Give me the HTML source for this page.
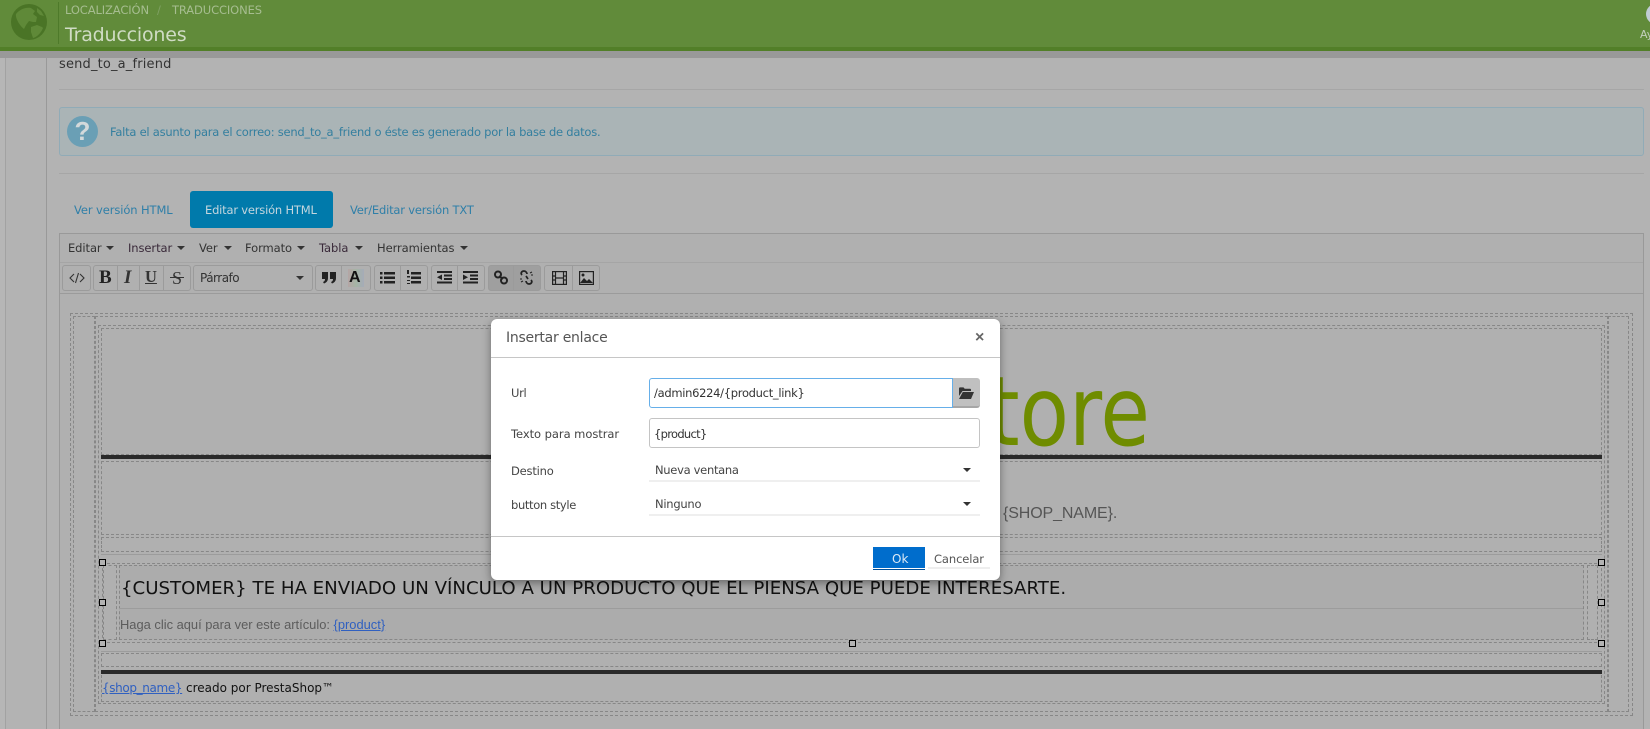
<!DOCTYPE html>
<html lang="es"><head><meta charset="utf-8"><title>Traducciones</title>
<style>
html,body{margin:0;padding:0;width:1650px;height:729px;overflow:hidden;background:#b3b3b3}
body{position:relative;font-family:"DejaVu Sans","Liberation Sans",sans-serif;font-size:12px;color:#3c3c3c}
.a,.t,.d,.v,.h,.b{position:absolute}
.t{white-space:nowrap;line-height:16px}
.d{border:1px dashed #878787;box-sizing:border-box}
.v{border-left:1px dashed #878787}
.h{border-top:1px dashed #878787}
.s{position:absolute;background:#9c9c9c;height:1px}
.b{border:1px solid #9b9b9b;border-radius:3px;box-sizing:border-box;height:26px;top:265px}
.sp{position:absolute;top:265px;height:26px;width:1px;background:#9b9b9b}
.hd{position:absolute;width:7px;height:7px;border:1px solid #000;box-sizing:border-box;background:#b3b3b3}
.arr{position:absolute;width:0;height:0;border-left:4px solid transparent;border-right:4px solid transparent;border-top:4.5px solid #333}
svg{position:absolute;overflow:visible}
.m{letter-spacing:-.08px;font-size:11.5px;color:#333}
.l{letter-spacing:-.35px;font-size:11.5px;color:#444}
</style></head><body>

<!-- sidebar lines -->
<div class="a" style="left:0;top:58px;width:5px;height:671px;background:#b6b6b6"></div>
<div class="a" style="left:5px;top:58px;width:1px;height:671px;background:#a2a2a2"></div>
<div class="a" style="left:46px;top:58px;width:1px;height:671px;background:#999"></div>

<!-- header -->
<div class="a" style="left:0;top:0;width:1650px;height:47px;background:#618b3a"></div>
<div class="a" style="left:0;top:47px;width:1650px;height:4px;background:#527f28"></div>
<div class="a" style="left:0;top:51px;width:1650px;height:7px;background:#999"></div>
<svg style="left:11px;top:4px" width="36" height="36" viewBox="0 0 36 36">
<circle cx="18" cy="18" r="18" fill="#4a7426"/>
<path d="M5 10C9 5 15 3 20 4l4 3-2 3 4 3-1 5-3 0-4-1-3 4-2 4C9 22 4 14 5 10z" fill="#5f8938"/>
<path d="M20 23l6-2 5 2 1 1c-2 5-6 9-10 10l-2-6z" fill="#5f8938"/>
<path d="M26 4l4 3 3 5-4-1-3-3z" fill="#5f8938"/>
</svg>
<div class="a" style="left:58px;top:2px;width:1px;height:42px;background:#4e7a2a"></div>
<div class="t" style="left:65px;top:2px;font-size:11.5px;letter-spacing:-.12px;color:#a6bd90">LOCALIZACIÓN</div>
<div class="t" style="left:157px;top:2px;font-size:11.5px;color:#7fa063">/</div>
<div class="t" style="left:172px;top:2px;font-size:11.5px;letter-spacing:-.12px;color:#a6bd90">TRADUCCIONES</div>
<div class="t" style="left:65px;top:24px;font-size:19px;line-height:22px;letter-spacing:-.2px;color:#d0dcc5">Traducciones</div>
<div class="a" style="left:1646px;top:3px;width:24px;height:22px;border-radius:50%;background:#c0ccd4"></div>
<div class="t" style="left:1640px;top:27px;font-size:11px;color:#c3d0bd">Ay</div>

<!-- content -->
<div class="t" style="left:59px;top:57px;font-size:13px;letter-spacing:.17px;color:#333">send_to_a_friend</div>
<div class="s" style="left:59px;top:89px;width:1585px;background:#a6a6a6"></div>
<div class="a" style="left:59px;top:107px;width:1585px;height:49px;box-sizing:border-box;background:#aab4b6;border:1px solid #90abb7;border-radius:3px"></div>
<div class="a" style="left:67px;top:116px;width:31px;height:31px;border-radius:50%;background:#6a9fb5;color:#d3d9db;font:bold 26px/31px 'Liberation Sans',sans-serif;text-align:center">?</div>
<div class="t" style="left:110px;top:124px;font-size:11.5px;letter-spacing:-.24px;color:#347f9f">Falta el asunto para el correo: send_to_a_friend o éste es generado por la base de datos.</div>
<div class="s" style="left:59px;top:173px;width:1585px;background:#a6a6a6"></div>

<!-- tabs -->
<div class="a" style="left:190px;top:191px;width:143px;height:37px;background:#007aab;border-radius:3px"></div>
<div class="t" style="left:74px;top:202px;font-size:11.5px;letter-spacing:-.1px;color:#2f7fa8">Ver versión HTML</div>
<div class="t" style="left:205px;top:202px;font-size:11.5px;letter-spacing:-.2px;color:#c4d6de">Editar versión HTML</div>
<div class="t" style="left:350px;top:202px;font-size:11.5px;letter-spacing:-.19px;color:#2f7fa8">Ver/Editar versión TXT</div>

<!-- editor frame -->
<div class="a" style="left:59px;top:233px;width:1585px;height:497px;box-sizing:border-box;border:1px solid #999;background:#b0b0b0"></div>
<div class="a" style="left:60px;top:262px;width:1583px;height:1px;background:#a5a5a5"></div>
<div class="a" style="left:60px;top:293px;width:1583px;height:1px;background:#9b9b9b"></div>

<!-- menu -->
<div class="t m" style="left:68px;top:240px">Editar</div><div class="arr" style="left:106px;top:246px"></div>
<div class="t m" style="left:128px;top:240px;color:#3a2a3a">Insertar</div><div class="arr" style="left:177px;top:246px"></div>
<div class="t m" style="left:199px;top:240px">Ver</div><div class="arr" style="left:224px;top:246px"></div>
<div class="t m" style="left:245px;top:240px">Formato</div><div class="arr" style="left:297px;top:246px"></div>
<div class="t m" style="left:319px;top:240px;color:#3a2a3a">Tabla</div><div class="arr" style="left:355px;top:246px"></div>
<div class="t m" style="left:377px;top:240px">Herramientas</div><div class="arr" style="left:460px;top:246px"></div>

<!-- toolbar -->
<div class="b" style="left:62px;width:29px"></div>
<div class="b" style="left:93px;width:98px"></div><div class="sp" style="left:117px"></div><div class="sp" style="left:139px"></div><div class="sp" style="left:163px"></div>
<div class="b" style="left:193px;width:120px"></div>
<div class="b" style="left:315px;width:56px"></div><div class="sp" style="left:341px"></div>
<div class="b" style="left:374px;width:54px"></div><div class="sp" style="left:400px"></div>
<div class="b" style="left:431px;width:54px"></div><div class="sp" style="left:457px"></div>
<div class="b" style="left:488px;width:53px;background:#9f9f9f"></div><div class="sp" style="left:513px"></div>
<div class="b" style="left:544px;width:56px"></div><div class="sp" style="left:572px"></div>

<svg style="left:69px;top:271px" width="16" height="14" viewBox="0 0 16 14" fill="none" stroke="#333" stroke-width="1.1"><path d="M5 3L1 7l4 4M11 3l4 4-4 4M9.5 2L6.5 12"/></svg>
<div class="t" style="left:99px;top:268px;font:bold 19px/20px 'Liberation Serif',serif;color:#222">B</div>
<div class="t" style="left:124px;top:268px;font:italic bold 19px/20px 'Liberation Serif',serif;color:#333">I</div>
<div class="t" style="left:145px;top:267px;font:bold 16.500px/20px 'Liberation Serif',serif;color:#333;text-decoration:underline">U</div>
<div class="t" style="left:172px;top:268px;font:18px/20px 'Liberation Serif',serif;color:#333">S</div>
<div class="a" style="left:170px;top:277px;width:14px;height:1px;background:#333"></div>
<div class="t m" style="left:200px;top:270px;font-size:12px;letter-spacing:-.5px">Párrafo</div><div class="arr" style="left:296px;top:276px"></div>
<svg style="left:322px;top:271px" width="14" height="13" viewBox="0 0 14 13" fill="#222"><path d="M0 1h6v6c0 3-1.500 4.500-4 5.500L1 11c1.500-.5 2-1.500 2-3H0zM8 1h6v6c0 3-1.500 4.500-4 5.500L9 11c1.500-.5 2-1.500 2-3H8z"/></svg>
<div class="a" style="left:348px;top:269px;width:16px;height:18px;background:linear-gradient(90deg,#b5a5a5,#a5b5a5 50%,#a5abb8)"></div>
<div class="t" style="left:349px;top:268px;font:bold 16px/20px 'Liberation Sans',sans-serif;color:#111">A</div>
<svg style="left:380px;top:271px" width="15" height="13" viewBox="0 0 15 13" fill="#222"><path d="M0 1h2.500v2.500H0zM4 1h11v2.500H4zM0 5.500h2.500V8H0zM4 5.500h11V8H4zM0 10h2.500v2.500H0zM4 10h11v2.500H4z"/></svg>
<svg style="left:407px;top:270px" width="14" height="15" viewBox="0 0 14 15" fill="#222"><path d="M0 0h2v4H0zM0 6h3v1.500H0zM0 10h3v1H0zM0 13h3v1H0zM4 2h10v2.500H4zM4 6.500h10V9H4zM4 11h10v2.500H4z"/></svg>
<svg style="left:437px;top:271px" width="15" height="13" viewBox="0 0 15 13" fill="#222"><path d="M0 0h15v2H0zM7 3.500h8v2H7zM7 7h8v2H7zM0 10.500h15v2H0zM5 3.500v5.500L0 6.250z"/></svg>
<svg style="left:463px;top:271px" width="15" height="13" viewBox="0 0 15 13" fill="#222"><path d="M0 0h15v2H0zM7 3.500h8v2H7zM7 7h8v2H7zM0 10.500h15v2H0zM0 3.500v5.500L5 6.250z"/></svg>
<svg style="left:494px;top:270px" width="14" height="15" viewBox="0 0 14 15" fill="none" stroke="#222" stroke-width="2"><circle cx="4" cy="4.500" r="3"/><circle cx="10" cy="10.500" r="3"/><path d="M5 6l4 3"/></svg>
<svg style="left:519px;top:270px" width="15" height="15" viewBox="0 0 15 15" fill="none" stroke="#222" stroke-width="1.700"><path d="M3 5c-2-2 0-4 2-4s3 2 3 3M12 10c2 2 0 4-2 4s-3-2-3-3M7 6l2 3"/><path d="M1 9h2M2 12l2-1M12 5h2M11 3l2-1" stroke-width="1"/></svg>
<svg style="left:552px;top:271px" width="15" height="14" viewBox="0 0 15 14" fill="none" stroke="#222" stroke-width="1.200"><rect x=".6" y=".6" width="13.800" height="12.800"/><path d="M3.500 .6v12.800M11.500 .6v12.800M.6 5h2.900M.6 9h2.900M11.500 5h2.900M11.500 9h2.900M3.500 7h8"/></svg>
<svg style="left:579px;top:271px" width="15" height="14" viewBox="0 0 15 14"><rect x=".6" y=".6" width="13.800" height="12.800" fill="none" stroke="#222" stroke-width="1.200"/><path d="M1 12l4-5 3 3 2-2 4 4z" fill="#222"/><circle cx="4" cy="4" r="1.500" fill="#222"/></svg>

<!-- email table visual aids -->
<div class="d" style="left:70px;top:313px;width:1563px;height:403px"></div>
<div class="d" style="left:73px;top:316px;width:22px;height:396px"></div>
<div class="d" style="left:1608px;top:316px;width:21px;height:396px"></div>
<div class="d" style="left:95px;top:316px;width:1513px;height:396px"></div>
<div class="d" style="left:98px;top:325px;width:1507px;height:379px"></div>
<div class="d" style="left:101px;top:328px;width:1501px;height:127px"></div>
<div class="a" style="left:101px;top:455px;width:1501px;height:4px;background:#2a2a2a"></div>
<div class="d" style="left:101px;top:461px;width:1501px;height:74px"></div>
<div class="d" style="left:101px;top:537px;width:1501px;height:15px"></div>
<div class="s" style="left:101px;top:554px;width:1501px"></div>
<div class="d" style="left:102px;top:563px;width:1500px;height:80px"></div>
<div class="a" style="left:119px;top:565px;width:1465px;height:75px;background:#acacac"></div>
<div class="d" style="left:103px;top:565px;width:14px;height:75px"></div>
<div class="d" style="left:119px;top:565px;width:1465px;height:75px"></div>
<div class="d" style="left:1587px;top:565px;width:11px;height:75px"></div>
<div class="s" style="left:119px;top:608px;width:1464px"></div>
<div class="s" style="left:101px;top:651px;width:1501px"></div>
<div class="d" style="left:101px;top:653px;width:1501px;height:14px"></div>
<div class="a" style="left:101px;top:670px;width:1501px;height:4px;background:#2a2a2a"></div>
<div class="d" style="left:101px;top:675px;width:1501px;height:27px;border-top:0"></div>

<!-- email text -->
<div class="t" style="left:1150px;top:364px;font:96px/96px 'DejaVu Sans',sans-serif;color:#6f8c00;transform:translateX(-100%) scaleX(.84);transform-origin:100% 0">Store</div>
<div class="t" style="left:1003px;top:505px;font:16px/18px 'Liberation Sans',sans-serif;letter-spacing:-.12px;color:#555">{SHOP_NAME}.</div>
<div class="t" style="left:121px;top:578px;font-size:18.17px;line-height:22px;color:#111">{CUSTOMER} TE HA ENVIADO UN VÍNCULO A UN PRODUCTO QUE EL PIENSA QUE PUEDE INTERESARTE.</div>
<div class="t" style="left:120px;top:617px;font:12.9px/16px 'Liberation Sans',sans-serif;color:#5c5c5c">Haga clic aquí para ver este artículo: <span style="color:#3060c0;text-decoration:underline">{product}</span></div>
<div class="t" style="left:102px;top:680px;font-size:12px;color:#111"><span style="color:#3060c0;text-decoration:underline;letter-spacing:-.36px">{shop_name}</span> creado por PrestaShop™</div>

<!-- resize handles -->
<div class="hd" style="left:99px;top:559px"></div><div class="hd" style="left:849px;top:559px"></div><div class="hd" style="left:1598px;top:559px"></div>
<div class="hd" style="left:99px;top:599px"></div><div class="hd" style="left:1598px;top:599px"></div>
<div class="hd" style="left:99px;top:640px"></div><div class="hd" style="left:849px;top:640px"></div><div class="hd" style="left:1598px;top:640px"></div>

<!-- dialog -->
<div class="a" style="left:491px;top:319px;width:509px;height:261px;background:#fff;border-radius:6px;box-shadow:0 3px 9px rgba(0,0,0,.4)"></div>
<div class="t" style="left:506px;top:329px;font-size:14px;line-height:18px;letter-spacing:-.25px;color:#555">Insertar enlace</div>
<div class="t" style="left:975px;top:329px;font:bold 16px/18px 'Liberation Sans',sans-serif;color:#666">×</div>
<div class="a" style="left:491px;top:357px;width:509px;height:1px;background:#c6c6c6"></div>
<div class="a" style="left:491px;top:536px;width:509px;height:1px;background:#c6c6c6"></div>
<div class="t l" style="left:511px;top:385px">Url</div>
<div class="t l" style="left:511px;top:426px;letter-spacing:-.05px">Texto para mostrar</div>
<div class="t l" style="left:511px;top:463px;letter-spacing:-.2px">Destino</div>
<div class="t l" style="left:511px;top:497px">button style</div>
<div class="a" style="left:649px;top:378px;width:304px;height:30px;box-sizing:border-box;border:1px solid #66afe9;border-radius:3px 0 0 3px;background:#fff"></div>
<div class="a" style="left:953px;top:378px;width:27px;height:30px;box-sizing:border-box;background:#c0c0c0;border-bottom:2px solid #a6a6a6;border-radius:0 3px 3px 0"></div>
<svg style="left:959px;top:387px" width="15" height="12" viewBox="0 0 15 12" fill="#333"><path d="M0 1.500C0 .8.500.4 1 .4h3.500l1.200 1.400H11c.6 0 1 .4 1 1V4H3.500L0 9z"/><path d="M3.800 5H15l-3 7H0z"/></svg>
<div class="t l" style="left:654px;top:385px;color:#333;letter-spacing:-.3px">/admin6224/{product_link}</div>
<div class="a" style="left:649px;top:418px;width:331px;height:30px;box-sizing:border-box;border:1px solid #c4c4c4;border-radius:3px;background:#fff"></div>
<div class="t l" style="left:654px;top:426px;color:#333;letter-spacing:-.7px">{product}</div>
<div class="t l" style="left:655px;top:462px;letter-spacing:-.3px">Nueva ventana</div>
<div class="arr" style="left:963px;top:468px"></div>
<div class="a" style="left:649px;top:480px;width:331px;height:2px;background:#efefef"></div>
<div class="t l" style="left:655px;top:496px;letter-spacing:-.25px">Ninguno</div>
<div class="arr" style="left:963px;top:502px"></div>
<div class="a" style="left:649px;top:514px;width:331px;height:2px;background:#efefef"></div>
<div class="a" style="left:873px;top:547px;width:52px;height:23px;box-sizing:border-box;background:#006dcc;border-bottom:1px solid #004f99;box-shadow:inset 0 -1px 0 #fff"></div>
<div class="t" style="left:892px;top:551px;font-size:12px;color:#dbe9f6">Ok</div>
<div class="t l" style="left:934px;top:551px;color:#555;letter-spacing:-.1px">Cancelar</div>
<div class="a" style="left:928px;top:567px;width:62px;height:2px;background:#eee"></div>
</body></html>
